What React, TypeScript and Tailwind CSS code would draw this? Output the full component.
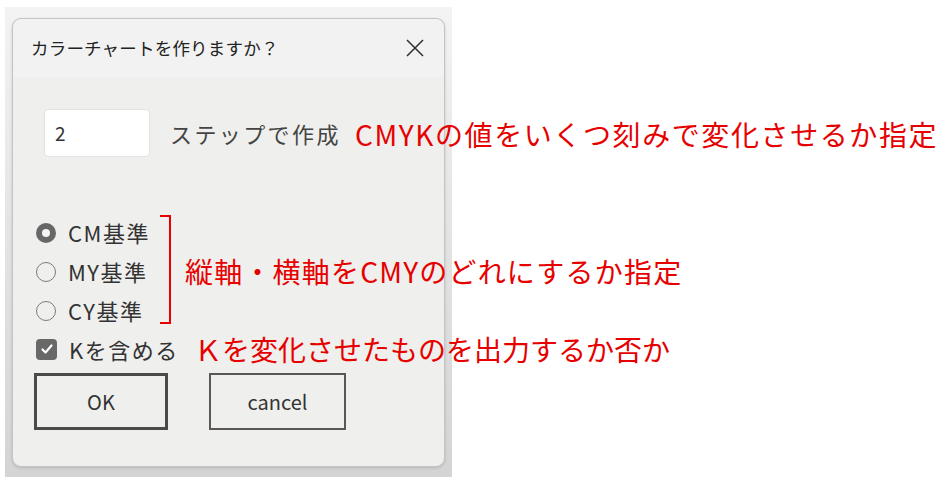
import React from "react";

const jp = { fontFamily: '"Noto Sans CJK JP", "Noto Sans", sans-serif' };

function Radio({ checked, label }: { checked?: boolean; label: string }) {
  return (
    <div className="flex items-center h-[39px] gap-[12px]">
      {checked ? (
        <span className="w-[20px] h-[20px] rounded-full bg-[#676767] flex items-center justify-center">
          <span className="w-[8px] h-[8px] rounded-full bg-[#f4f4f4]"></span>
        </span>
      ) : (
        <span className="w-[20px] h-[20px] rounded-full border-[1.5px] border-[#7b7b7b]"></span>
      )}
      <span className="text-[22px] tracking-[1.5px] text-[#333]">{label}</span>
    </div>
  );
}

export default function App() {
  return (
    <div className="relative w-[952px] h-[488px] bg-white overflow-hidden" style={jp}>
      {/* window shadow area */}
      <div className="ml-[5px] mt-[7px] w-[447px] h-[470px] px-[7px] pt-[11px] bg-gradient-to-b from-[#f3f3f3] to-[#d4d4d4]">
        <div className="w-[433px] h-[449px] rounded-[9px] border border-[#c4c4c4] bg-[#efefed] shadow-[0_1px_3px_rgba(0,0,0,0.15)] flex flex-col">
          {/* title bar */}
          <div className="h-[58px] flex items-center justify-between pl-[18px] pr-[19px] rounded-t-[9px] bg-[#f2f2f2]">
            <span className="text-[17.5px] tracking-[0.2px] text-[#222]">カラーチャートを作りますか？</span>
            <svg className="w-[20px] h-[20px]" viewBox="0 0 20 20" fill="none" stroke="#333" strokeWidth={1.6}>
              <path d="M2 2L18 18M18 2L2 18" />
            </svg>
          </div>

          <div className="flex flex-col pl-[23px]">
            {/* step input */}
            <div className="flex items-center mt-[32px] ml-[8px] gap-[20px]">
              <div className="w-[106px] h-[48px] bg-white rounded-[4px] border border-[#e2e2e2] flex items-center pl-[10px] text-[19px] text-[#333]">
                2
              </div>
              <span className="text-[22px] text-[#444] tracking-[2.4px]">ステップで作成</span>
            </div>

            {/* radios */}
            <div className="flex flex-col mt-[56px]">
              <Radio checked label="CM基準" />
              <Radio label="MY基準" />
              <Radio label="CY基準" />
            </div>

            {/* checkbox */}
            <div className="flex items-center h-[38px] gap-[12px]">
              <span className="w-[21px] h-[21px] rounded-[4px] bg-[#686868] flex items-center justify-center">
                <svg className="w-[14px] h-[14px]" viewBox="0 0 14 14" fill="none" stroke="white" strokeWidth={2.2} strokeLinecap="round" strokeLinejoin="round">
                  <path d="M2.5 7.5L5.5 10.5L11.5 3.5" />
                </svg>
              </span>
              <span className="text-[22px] tracking-[1.5px] text-[#333]">Kを含める</span>
            </div>

            {/* buttons */}
            <div className="flex mt-[5px] -ml-[2px] gap-[41px]">
              <button className="w-[134px] h-[57px] border-[3px] border-[#4a4a4a] bg-[#efefed] text-[20px] text-[#333]">
                OK
              </button>
              <button className="w-[137px] h-[57px] border-2 border-[#5c5757] bg-[#efefed] text-[20px] text-[#333]">
                cancel
              </button>
            </div>
          </div>
        </div>
      </div>

      {/* annotations */}
      <div className="absolute left-[355px] top-[114px] text-[28px] leading-[40px] tracking-[1.6px] text-[#e60000] whitespace-nowrap">
        CMYKの値をいくつ刻みで変化させるか指定
      </div>
      <div className="absolute left-[160px] top-[215px] w-[11px] h-[109px] border-y-2 border-r-2 border-[#e60000]"></div>
      <div className="absolute left-[185px] top-[251px] text-[28px] leading-[40px] tracking-[1.2px] text-[#e60000] whitespace-nowrap">
        縦軸・横軸をCMYのどれにするか指定
      </div>
      <div className="absolute left-[194px] top-[329px] text-[28px] leading-[40px] text-[#e60000] whitespace-nowrap">
        Ｋを変化させたものを出力するか否か
      </div>
    </div>
  );
}
